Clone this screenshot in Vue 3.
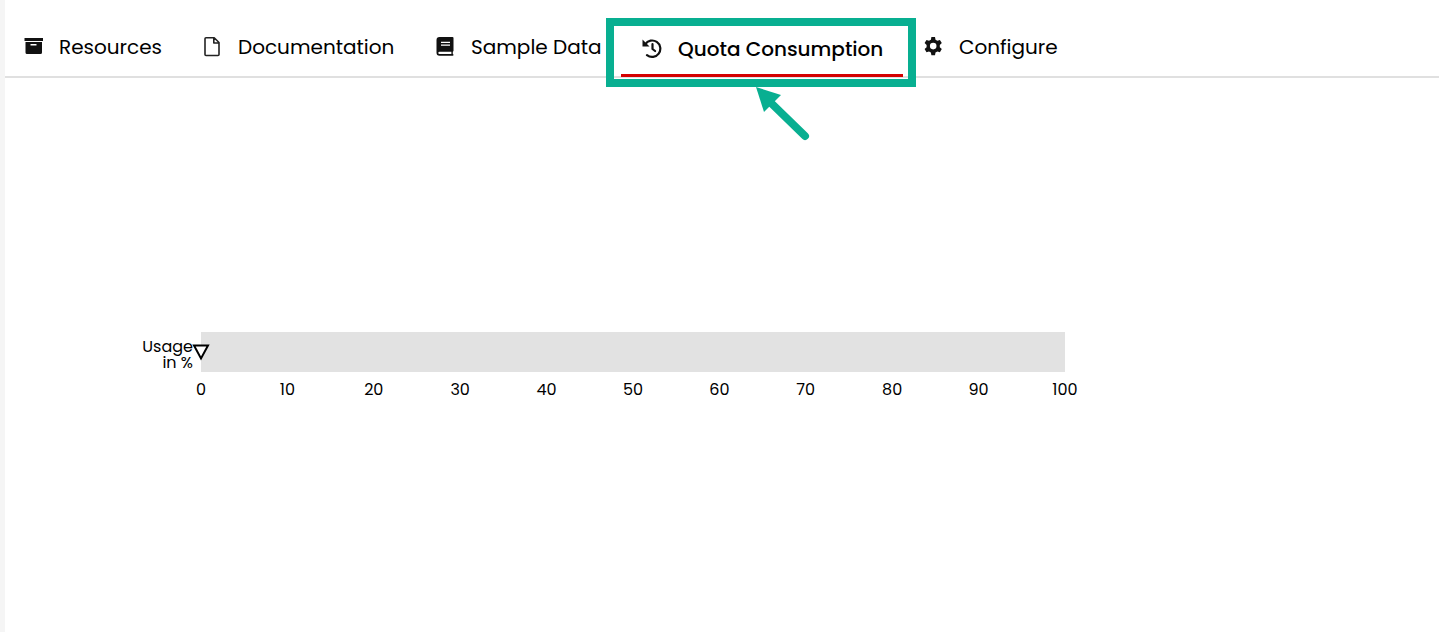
<template>
  <div class="page">
    <nav class="tabs" aria-label="Sections">
      <a
        v-for="tab in tabs"
        :key="tab.id"
        href="#"
        class="tab"
        :class="{ active: tab.id === activeTab }"
        @click.prevent="activeTab = tab.id"
      >
        <svg v-if="tab.id === 'resources'" class="icon" viewBox="0 0 20 20">
          <path d="M1.500 1H20v3H1.500z" />
          <path fill-rule="evenodd" d="M2.500 5H19v10.500q0 1.500-1.500 1.500H4q-1.500 0-1.500-1.500zM7.500 7v1.600h6V7z" />
        </svg>
        <svg v-else-if="tab.id === 'documentation'" class="icon" viewBox="0 0 20 20">
          <path
            class="line"
            d="M4 .8h8.200L17 5.500v12q0 1-1 1H4q-1 0-1-1V1.800q0-1 1-1zM11.800 1V6H17"
          />
        </svg>
        <svg v-else-if="tab.id === 'samples'" class="icon" viewBox="0 0 20 20">
          <path
            fill-rule="evenodd"
            d="M4.500 0h13q1 0 1 1v12.800q0 .7-.7 1v2.200q.7.200.7 1t-.8.800H4.500Q1.500 18.800 1.500 15.500V3Q1.500 0 4.500 0zM6 4.700v1.200h9V4.700zM6 7.500v1.200h9V7.500zM4.500 14.800q-1.200 0-1.200 1.100t1.200 1.200h11.900v-2.300z"
          />
        </svg>
        <svg v-else-if="tab.id === 'quota'" class="icon" viewBox="0 0 20 20">
          <path class="line thick" d="M3.200 5.300A8.200 8.200 0 1 1 5 16.100" />
          <path d="M.5.400v7h7z" />
          <path class="line thick" d="M10.500 5.200V10l2.600 2" />
        </svg>
        <svg v-else class="icon" viewBox="0 0 20 20">
          <path
            fill-rule="evenodd"
            d="M8.400 0h3.600l.5 2.700 1.900 1.100 2.500-.9 1.900 3.200-2 1.800v2.400l2 1.800-1.900 3.200-2.500-.9-1.900 1.100-.5 2.700H8.400l-.5-2.700L6 14.400l-2.500.9-1.900-3.200 2-1.800V7.900l-2-1.800 1.900-3.200 2.500.9 1.900-1.100zM10.200 5.800a3.300 3.300 0 1 0 0 6.600A3.300 3.300 0 0 0 10.200 5.800z"
          />
        </svg>
        <span class="label">{{ tab.label }}</span>
        <template v-if="tab.id === 'quota'">
          <span class="frame"></span>
          <svg class="arrow" viewBox="0 0 56 56">
            <path class="shaft" d="M14 15L50 50" />
            <path class="head" d="M1 1L26 9L9 26z" />
          </svg>
        </template>
      </a>
    </nav>

    <main class="content">
      <div class="chart">
        <div class="axis-title">Usage<br />in %</div>
        <div class="plot">
          <div class="track" role="meter" aria-label="Usage in %" aria-valuemin="0" aria-valuemax="100" :aria-valuenow="usage">
            <svg class="marker" :style="{ left: usage + '%' }" viewBox="0 0 18 18">
              <path d="M2 2.500h14L9 15.500z" />
            </svg>
          </div>
          <div class="ticks">
            <span v-for="tick in ticks" :key="tick" class="tick">{{ tick }}</span>
          </div>
        </div>
      </div>
    </main>
  </div>
</template>

<script setup>
import { ref } from 'vue'

const tabs = [
  { id: 'resources', label: 'Resources' },
  { id: 'documentation', label: 'Documentation' },
  { id: 'samples', label: 'Sample Data' },
  { id: 'quota', label: 'Quota Consumption' },
  { id: 'configure', label: 'Configure' }
]

const activeTab = ref('quota')
const usage = ref(0)
const ticks = [0, 10, 20, 30, 40, 50, 60, 70, 80, 90, 100]
</script>

<style>
body {
  margin: 0;
  background: #fff;
}
</style>

<style scoped>
.page {
  min-height: 100vh;
  box-sizing: border-box;
  border-left: 5px solid #f5f5f5;
  font-family: Poppins, Inter, sans-serif;
  font-weight: 400;
  color: #000;
}

.tabs {
  display: grid;
  grid-template-columns: 179px 233px 204px 284px auto;
  height: 60px;
  padding-top: 16px;
  border-bottom: 2px solid #e0e0e0;
}

.tab {
  position: relative;
  display: flex;
  align-items: center;
  gap: 16px;
  height: 61px;
  padding: 1px 18px 0;
  box-sizing: border-box;
  color: #000;
  font-size: 20px;
  line-height: 30px;
  text-decoration: none;
  white-space: nowrap;
}

.tab.active {
  margin-right: 2px;
  padding: 7px 20px 0 21px;
  font-weight: 500;
  border-bottom: 3px solid #d40000;
}

.icon {
  flex: none;
  width: 20px;
  height: 20px;
  fill: #111;
}

.line {
  fill: none;
  stroke: #222;
  stroke-width: 1.6;
  stroke-linejoin: round;
}

.thick {
  stroke: #111;
  stroke-width: 2.2;
  stroke-linecap: round;
}

.frame {
  position: absolute;
  z-index: 1;
  top: 2px;
  right: -13px;
  bottom: -13px;
  left: -15px;
  border: 8px solid #08af91;
  pointer-events: none;
}

.arrow {
  position: absolute;
  z-index: 1;
  top: 70px;
  left: 134px;
  width: 56px;
  height: 56px;
  pointer-events: none;
}

.shaft {
  fill: none;
  stroke: #08af91;
  stroke-width: 8;
  stroke-linecap: round;
}

.head {
  fill: #08af91;
}

.content {
  padding: 254px 80px 0 136px;
}

.chart {
  display: flex;
  gap: 8px;
  font-size: 16px;
}

.axis-title {
  flex: none;
  width: 52px;
  padding-top: 7px;
  line-height: 16px;
  text-align: right;
}

.plot {
  flex: 1;
  max-width: 864px;
}

.track {
  position: relative;
  height: 40px;
  background: #e2e2e2;
}

.marker {
  position: absolute;
  top: 11px;
  width: 18px;
  height: 18px;
  margin-left: -9px;
  fill: #fff;
  stroke: #000;
  stroke-width: 2;
}

.ticks {
  display: flex;
  justify-content: space-between;
  padding-top: 6px;
  line-height: 24px;
}

.tick {
  display: flex;
  justify-content: center;
  width: 0;
}
</style>
